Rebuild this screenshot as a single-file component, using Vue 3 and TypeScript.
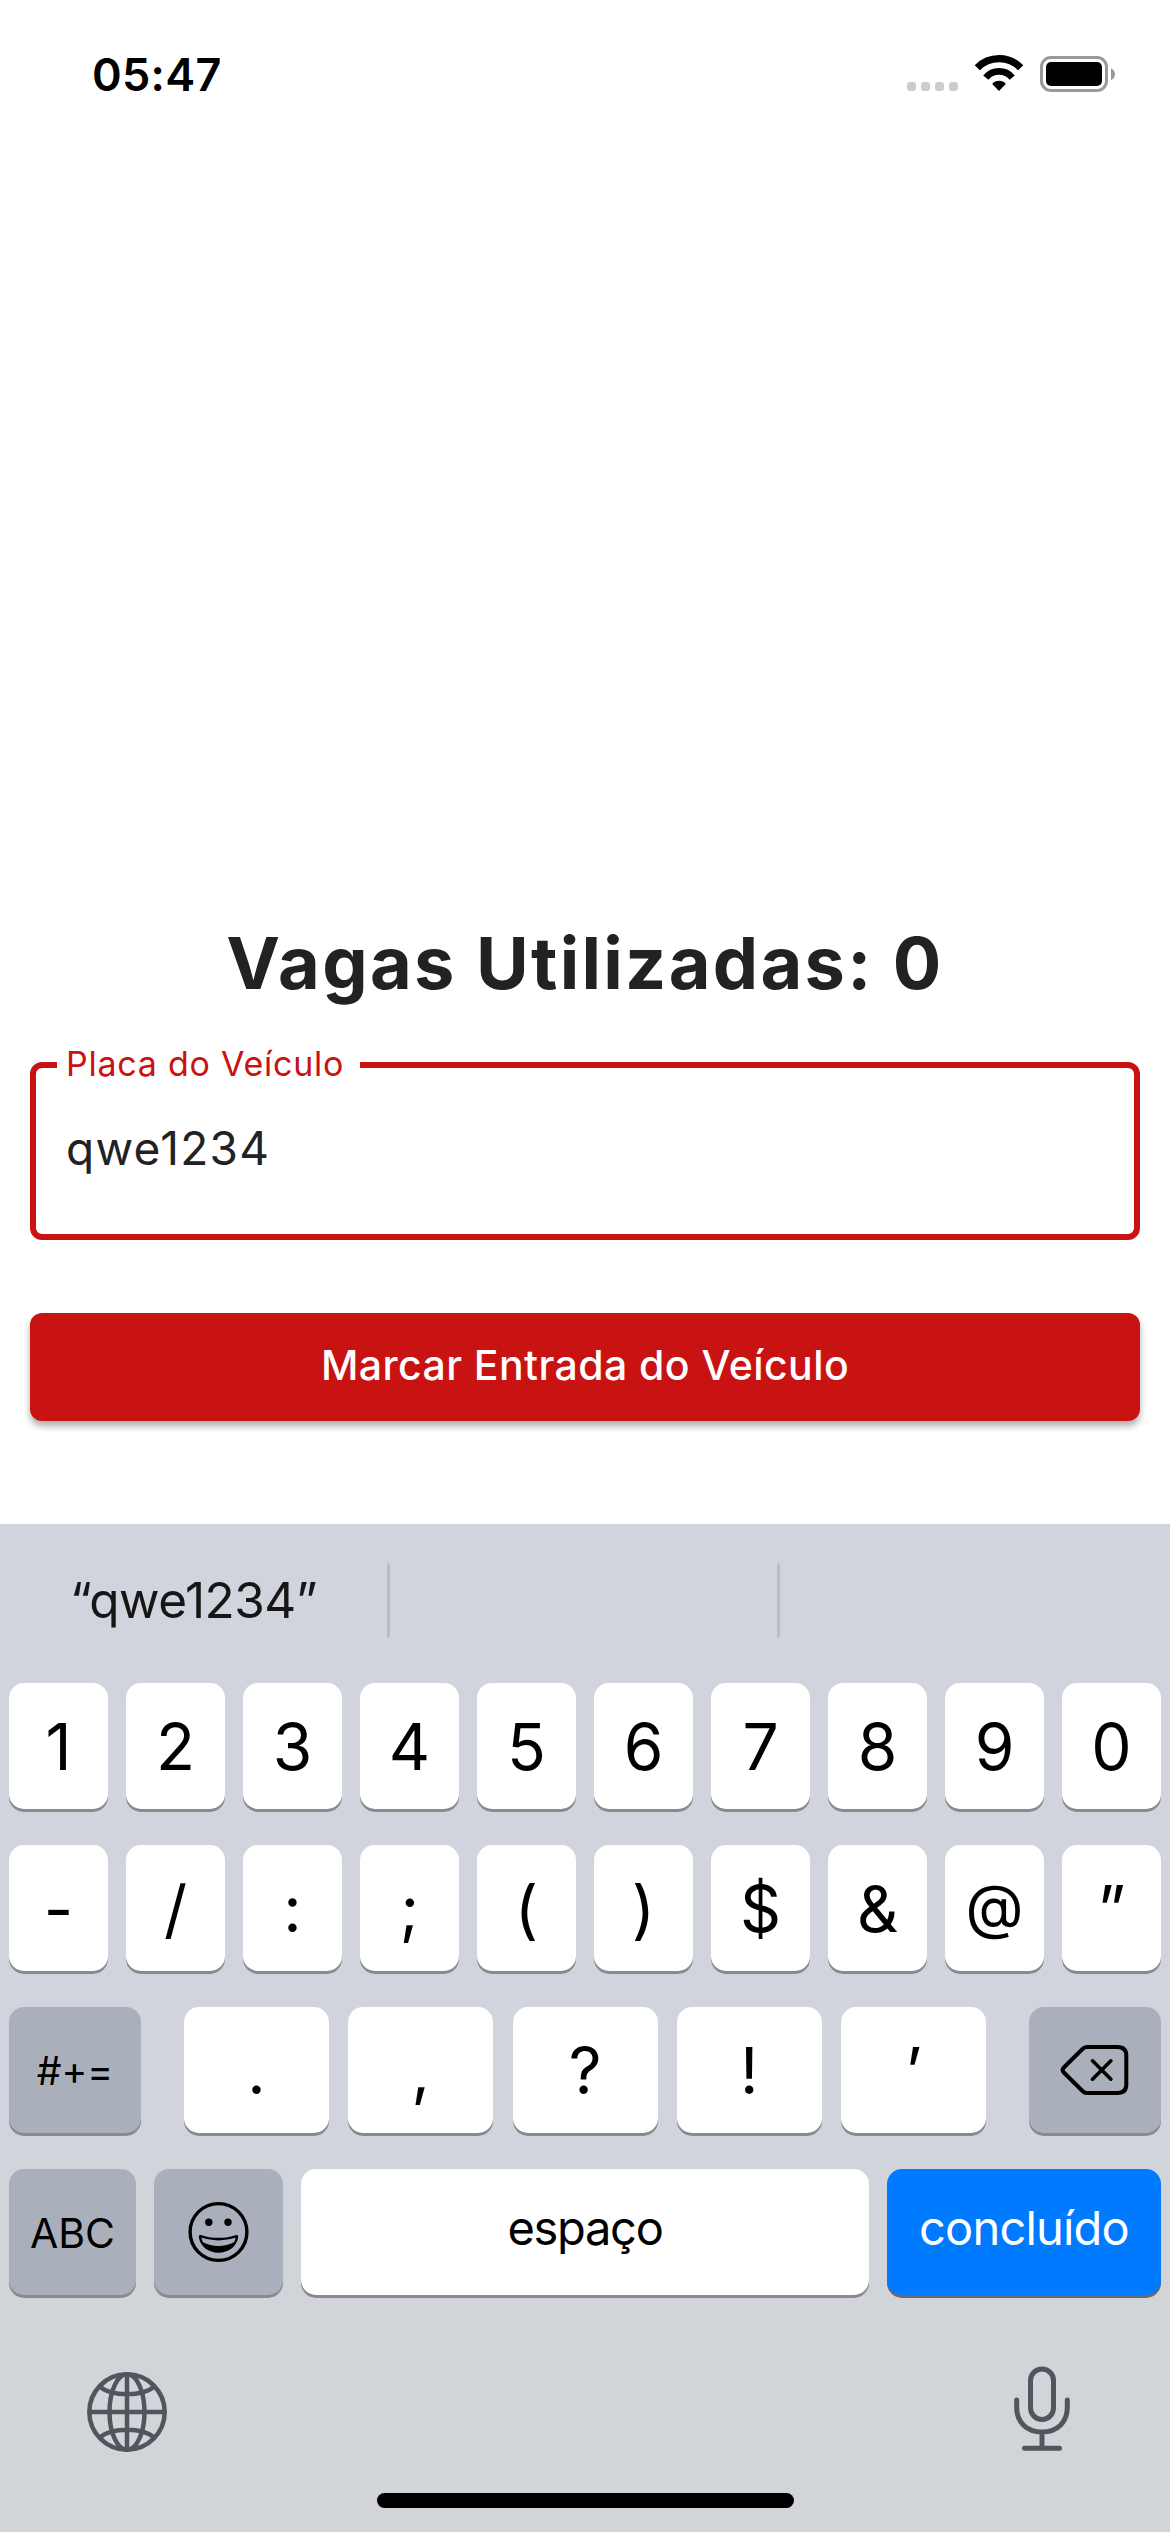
<script setup lang="ts">
import { ref } from 'vue'

const usedSpots = ref(0)
const plate = ref('qwe1234')

const digitRow: string[] = ['1', '2', '3', '4', '5', '6', '7', '8', '9', '0']
const symbolRow: string[] = ['-', '/', ':', ';', '(', ')', '$', '&', '@', '”']
const punctuationRow: string[] = ['.', ',', '?', '!', '’']
</script>

<template>
  <div class="screen">
    <header class="status">
      <time class="clock">05:47</time>
      <div class="indicators">
        <div class="dots"><i v-for="n in 4" :key="n" /></div>
        <svg class="wifi" width="50" height="38" viewBox="0 0 50 38">
          <path d="M3.300 12.800A30.400 30.400 0 0 1 46.700 12.800" fill="none" stroke="#000" stroke-width="7.300" />
          <path d="M11.800 22.700A17.100 17.100 0 0 1 38.200 22.700" fill="none" stroke="#000" stroke-width="6.800" />
          <path d="M25 36L18.200 29A8.600 8.600 0 0 1 31.800 29Z" />
        </svg>
        <svg class="battery" width="76" height="36" viewBox="0 0 76 36">
          <rect x="1.5" y="1.5" width="65" height="33" rx="9.5" fill="none" stroke="#999" stroke-width="3" />
          <rect x="6" y="6" width="56" height="24" rx="5" />
          <path d="M71 12.5C76.300 14.500 76.300 22 71 24Z" fill="#999" />
        </svg>
      </div>
    </header>

    <main class="content">
      <h1 class="title">Vagas Utilizadas: {{ usedSpots }}</h1>
      <div class="field">
        <label class="label">Placa do Veículo</label>
        <div class="value">{{ plate }}</div>
      </div>
      <button class="submit"><span>Marcar Entrada do Veículo</span></button>
    </main>

    <section class="keyboard">
      <div class="suggestions">
        <div class="suggestion"><span>“{{ plate }}”</span></div>
        <i class="divider" />
        <div class="suggestion" />
        <i class="divider" />
        <div class="suggestion" />
      </div>
      <div class="row">
        <div v-for="k in digitRow" :key="k" class="key"><span>{{ k }}</span></div>
      </div>
      <div class="row">
        <div v-for="k in symbolRow" :key="k" class="key" :class="{ at: k === '@' }"><span>{{ k }}</span></div>
      </div>
      <div class="row spread">
        <div class="key dark shift"><span>#+=</span></div>
        <div class="group">
          <div v-for="k in punctuationRow" :key="k" class="key wide"><span>{{ k }}</span></div>
        </div>
        <div class="key dark erase">
          <svg width="70" height="52" viewBox="0 0 70 52" fill="none" stroke="#000" stroke-linecap="round" stroke-linejoin="round">
            <path d="M27 3H57.500Q66.300 3 66.300 11.500V40.500Q66.300 49 57.500 49H27Q24.500 49 22.500 47L3.800 28.500Q1.300 26 3.800 23.500L22.500 5Q24.500 3 27 3Z" stroke-width="4" />
            <path d="M32.500 16.800L50.900 35.200M50.900 16.800L32.500 35.200" stroke-width="3.600" />
          </svg>
        </div>
      </div>
      <div class="row">
        <div class="key dark abc"><span>ABC</span></div>
        <div class="key dark emoji">
          <svg width="62" height="62" viewBox="0.5 0 62 62">
            <circle cx="31" cy="31" r="28.400" fill="none" stroke="#000" stroke-width="3.400" />
            <circle cx="21.300" cy="21.300" r="3.700" />
            <circle cx="40.500" cy="21.300" r="3.700" />
            <path d="M13.300 34C24 37.800 38 37.800 48.700 34Q50.900 33.600 50.700 36C49.300 45.500 41 51.700 31 51.700C21 51.700 12.700 45.500 11.300 36Q11.100 33.600 13.300 34Z" />
            <path d="M13.900 36.600C24 40.300 38 40.300 48.100 36.600L46.800 41C37 46.300 25 46.300 15.200 41Z" fill="#aab0bb" />
          </svg>
        </div>
        <div class="key space"><span>espaço</span></div>
        <div class="key done"><span>concluído</span></div>
      </div>
      <footer class="dock">
        <svg class="globe" width="80" height="80" viewBox="0 0 80 80" fill="none" stroke="#51565c" stroke-width="4.500">
          <circle cx="40" cy="40" r="37.700" />
          <ellipse cx="40" cy="40" rx="17.500" ry="37.700" />
          <path d="M40 2V78M2 40H78M12.500 14.500Q22 22.300 40 22.300T67.500 14.500M12.500 65.500Q22 57.700 40 57.700T67.500 65.500" />
        </svg>
        <svg class="mic" width="56" height="86" viewBox="0 0 56 86" fill="none" stroke="#51565c" stroke-width="5" stroke-linecap="round">
          <rect x="16.500" y="3" width="23" height="50.500" rx="11.500" />
          <path d="M2.700 34V41.500C2.700 56 12.500 66 28 66S53.300 56 53.300 41.500V34M28 66V82M10.500 82.200H45.500" />
        </svg>
      </footer>
      <div class="home" />
    </section>
  </div>
</template>

<style>
body {
  margin: 0;
  background: #fff;
}
</style>

<style scoped>
.screen {
  width: 1170px;
  height: 2532px;
  display: flex;
  flex-direction: column;
  overflow: hidden;
  background: #fff;
  color: #000;
  font-family: Inter, "Liberation Sans", sans-serif;
}
.status {
  height: 148px;
  box-sizing: border-box;
  padding: 0 54px 0 92px;
  display: flex;
  justify-content: space-between;
  align-items: center;
}
.clock {
  font-size: 45px;
  font-weight: 600;
  letter-spacing: 0.3px;
}
.indicators {
  display: flex;
  align-items: center;
}
.dots {
  display: flex;
  gap: 5px;
  margin: 25px 16px 0 0;
}
.dots i {
  width: 9px;
  height: 9px;
  border-radius: 3px;
  background: #ccc;
}
.wifi {
  margin-right: 16px;
}
.content {
  height: 1376px;
  box-sizing: border-box;
  padding: 770px 30px 0;
}
.title {
  margin: 0;
  height: 144px;
  line-height: 90px;
  font-size: 72px;
  font-weight: 700;
  color: #222;
  text-align: center;
  letter-spacing: 2.3px;
  white-space: nowrap;
}
.field {
  position: relative;
  height: 178px;
  box-sizing: border-box;
  border: 6px solid #c91212;
  border-radius: 12px;
  padding: 52px 30px 0;
}
.label {
  position: absolute;
  left: 21px;
  top: -24px;
  width: 303px;
  box-sizing: border-box;
  padding-left: 9px;
  background: #fff;
  color: #c91212;
  font-size: 34px;
  line-height: 40px;
  letter-spacing: 0.75px;
  white-space: nowrap;
}
.value {
  font-size: 46px;
  line-height: 56px;
  letter-spacing: 1.3px;
  color: #222;
}
.submit {
  display: flex;
  align-items: center;
  justify-content: center;
  width: 100%;
  height: 108px;
  margin-top: 73px;
  padding: 0 0 4px;
  border: 0;
  border-radius: 12px;
  background: #c91212;
  box-shadow: 0 5px 7px rgba(0, 0, 0, 0.32);
  color: #fff;
  font-family: inherit;
  font-size: 41px;
  font-weight: 500;
  letter-spacing: 0.43px;
}
.keyboard {
  height: 1008px;
  background: linear-gradient(#d1d4dc 62%, #d1d4d9 74%, #d2d4d8);
}
.suggestions {
  height: 159px;
  box-sizing: border-box;
  padding-top: 39px;
  display: flex;
}
.suggestion {
  flex: 0 0 387px;
  height: 75px;
  line-height: 75px;
  text-align: center;
  font-size: 49.5px;
  letter-spacing: -0.5px;
  color: #161617;
}
.divider {
  width: 3px;
  height: 75px;
  border-radius: 2px;
  background: #bbbdc1;
}
.row {
  display: flex;
  gap: 18px;
  height: 126px;
  margin: 0 9px 36px;
}
.spread {
  justify-content: space-between;
}
.group {
  display: flex;
  gap: 19.25px;
}
.key {
  width: 99px;
  height: 126px;
  box-sizing: border-box;
  padding-top: 2px;
  display: flex;
  align-items: center;
  justify-content: center;
  border-radius: 15px;
  background: #fff;
  box-shadow: 0 3px 0 #898a8d;
  font-size: 64px;
  line-height: 80px;
}
.at {
  padding: 0 0 5px;
  font-size: 60px;
}
.wide {
  width: 145px;
}
.dark {
  background: #aab0bb;
}
.shift,
.erase {
  width: 132px;
}
.shift {
  font-size: 39px;
}
.erase,
.emoji {
  padding: 0;
}
.abc {
  width: 127px;
  font-size: 41px;
}
.emoji {
  width: 129px;
}
.space {
  width: 568px;
  padding: 0 0 9px;
  font-size: 47px;
  letter-spacing: -1.3px;
}
.done {
  width: 274px;
  padding: 0 0 9px;
  background: #007aff;
  box-shadow: 0 3px 0 #67696c;
  color: #fff;
  font-size: 47px;
  letter-spacing: -0.8px;
}
.dock {
  display: flex;
  justify-content: space-between;
  height: 80px;
  padding: 0 100px 0 87px;
  margin-top: 77px;
}
.globe {
  display: block;
}
.mic {
  margin-top: -6px;
}
.home {
  width: 417px;
  height: 15px;
  margin: 41px auto 0;
  border-radius: 8px;
  background: #000;
}
</style>
